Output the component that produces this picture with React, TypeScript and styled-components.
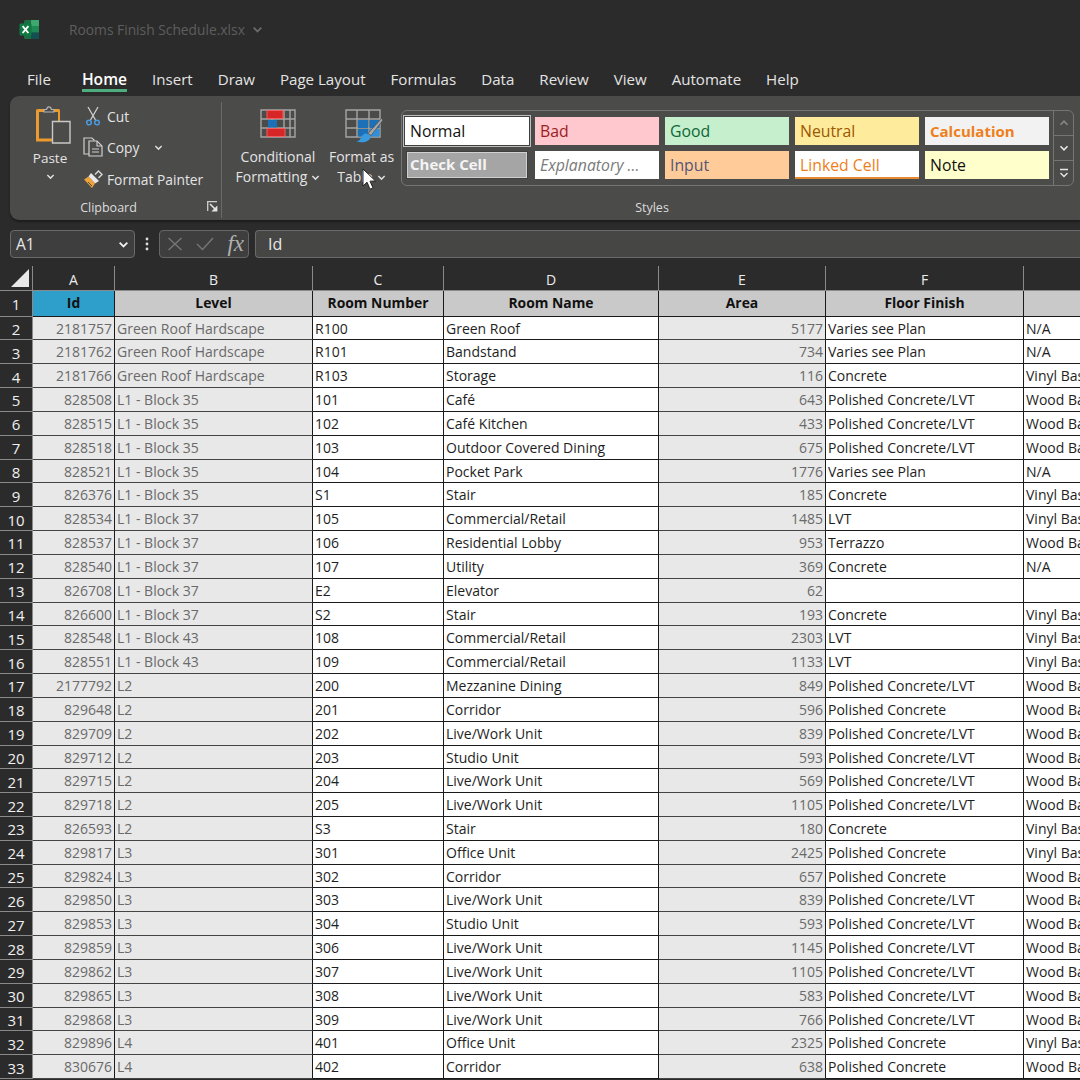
import React from "react";
import styled, { createGlobalStyle } from "styled-components";

const Global = createGlobalStyle`
  html, body { margin: 0; padding: 0; background: #2b2b2b; overflow: hidden; }
  #root { width: 1080px; height: 1080px; overflow: hidden; }
  * { box-sizing: border-box; }
`;
const FONT = `"Open Sans", "Noto Sans", "Liberation Sans", sans-serif`;

const Page = styled.div`
  position: relative; width: 1080px; height: 1080px; overflow: hidden;
  background: #2b2b2b; font-family: ${FONT}; color: #e6e6e6;
`;
const TitleBar = styled.div`
  height: 60px; display: flex; align-items: center; padding: 0 0 1px 19px;
`;
const FileName = styled.div`
  margin-left: 29px; font-size: 13.8px; color: #5e5e5e; display: flex; align-items: center; gap: 7px;
`;
const Tabs = styled.div`
  height: 36px; display: flex; padding-left: 27px; gap: 25px;
`;
const Tab = styled.div<{ $active?: boolean }>`
  height: 36px; padding-top: 7.5px; font-size: ${p => p.$active ? 15.6 : 15.1}px; line-height: 22px; color: ${p => p.$active ? "#fff" : "#e4e4e4"};
  font-weight: ${p => p.$active ? 600 : 400}; margin-left: ${p => p.$active ? 6 : 0}px; white-space: nowrap;
  &::after { content: ""; display: ${p => p.$active ? "block" : "none"}; height: 3px; background: #4fae7f; margin-top: -0.5px; }
`;
const Ribbon = styled.div`
  height: 124px; margin-left: 10px; background: #4b4b4a; border-radius: 9px 0 0 9px;
  display: flex; box-shadow: 0 2px 2px #1d1d1d;
`;
const ClipGroup = styled.div`
  width: 212px; height: 116px; margin-top: 6px; border-right: 1px solid #6a6a6a; position: relative;
  display: grid; grid-template-columns: 68px 1fr; grid-template-rows: 1fr 22px;
`;
const PasteCol = styled.div`
  display: flex; flex-direction: column; align-items: center; padding: 0 0 0 12px;
  font-size: 13.5px; line-height: 18px; color: #e4e4e4;
`;
const PasteIconWrap = styled.div`
  margin: 4px 0 5px 6px; display: flex;
`;
const PasteChevron = styled.div`
  margin-top: 5px; display: flex;
`;
const ClipCol = styled.div`
  padding: 0 0 0 4px; display: flex; flex-direction: column;
`;
const ClipItem = styled.div`
  height: 32px; display: flex; align-items: center; gap: 3px; font-size: 13.8px; color: #e4e4e4;
  &:first-child { height: 29px; padding-bottom: 1px; }
`;
const IconSlot = styled.span`
  width: 22px; display: flex; justify-content: center; flex: none;
`;
const CopyChevron = styled.span`
  margin-left: 12px; display: flex;
`;
const GroupLabel = styled.div`
  grid-column: 1 / 3; font-size: 12.5px; color: #dcdcdc; display: flex; justify-content: center; align-items: center;
  padding-right: 14px; height: 22px; position: relative;
`;
const Launcher = styled.span`
  position: absolute; right: 3px; top: 5px; display: flex;
`;
const FormatGroup = styled.div`
  width: 179px; display: flex; padding-top: 13px; padding-left: 14px;
`;
const BigButton = styled.div<{ $w: number; $shift?: number }>`
  width: ${p => p.$w}px; display: flex; flex-direction: column; align-items: center;
  padding-left: ${p => p.$shift ?? 0}px;
  font-size: 14px; line-height: 20px; color: #e4e4e4; text-align: center;
`;
const IconWrap = styled.div<{ $h: number; $x?: number }>`
  height: ${p => p.$h}px; display: flex; align-items: flex-start; margin-left: ${p => p.$x ?? 0}px;
`;
const ChevronLine = styled.div`
  display: flex; align-items: center; gap: 4px; white-space: nowrap;
`;
const StylesGroup = styled.div`
  flex: 1; padding-top: 14px; display: flex; flex-direction: column;
`;
const Gallery = styled.div`
  width: 673px; height: 76px; border: 1px solid #757575; border-radius: 6px; display: flex; padding: 6px 0 0 3px;
`;
const GalleryGrid = styled.div`
  width: 644px; display: grid; grid-template-columns: repeat(5, 124px); grid-template-rows: 28px 28px; column-gap: 6px; row-gap: 6px;
`;
const StyleCell = styled.div<{ $bg: string; $c: string; $b?: boolean; $i?: boolean; $under?: boolean }>`
  background: ${p => p.$bg}; color: ${p => p.$c}; font-size: ${p => p.$b ? 15 : 15.8}px; line-height: 28px; padding-left: 5px;
  font-weight: ${p => p.$b ? 700 : 400}; font-style: ${p => p.$i ? "italic" : "normal"};
  white-space: nowrap; overflow: hidden;
  border-bottom: ${p => p.$under ? "2px solid #e58a2e" : "0"};
`;
const NormalCell = styled(StyleCell)`
  box-shadow: 0 0 0 1px #3f3f3f, 0 0 0 2px #bdbdbd;
`;
const CheckCell = styled(StyleCell)`
  margin: 1px 2px; padding-left: 3px; line-height: 25px;
  box-shadow: inset 0 0 0 1px #d0d0d0, 0 0 0 1px #3f3f3f;
`;
const GalleryScroll = styled.div`
  flex: 1; margin: -6px 0 0 4px; border-left: 1px solid #757575; display: flex; flex-direction: column;
`;
const ScrollBtn = styled.div`
  flex: 1; display: flex; align-items: center; justify-content: center; border-bottom: 1px solid #757575;
  &:last-child { border-bottom: 0; }
`;
const StylesLabel = styled.div`
  width: 502px; text-align: center; font-size: 12.5px; color: #dcdcdc; margin-top: 13px;
`;
const FormulaBar = styled.div`
  height: 46px; padding: 10px 0 0 10px; display: flex; align-items: flex-start;
`;
const NameBox = styled.div`
  width: 125px; height: 28px; border: 1px solid #6a6a6a; background: #3e3e3e; border-radius: 4px; font-size: 15.5px;
  display: flex; align-items: center; justify-content: space-between; padding: 0 5px; color: #e8e8e8;
`;
const Dots = styled.div`
  width: 24px; display: flex; justify-content: center; height: 28px; align-items: center;
`;
const FxBox = styled.div`
  width: 90px; height: 28px; border: 1px solid #666; background: #3e3e3e; border-radius: 4px; display: flex; align-items: center;
  padding: 0 4px 0 7px; justify-content: space-between; color: #aaa;
`;
const Fx = styled.span`
  font-family: "Liberation Serif", serif; font-style: italic; font-size: 23px; color: #b0b0b0; line-height: 22px;
`;
const FormulaInput = styled.div`
  flex: 1; margin-left: 6px; height: 28px; border: 1px solid #6a6a6a; border-right: 0; background: #464645; border-radius: 4px 0 0 4px;
  font-size: 16px; line-height: 26px; padding-left: 12px; color: #e8e8e8;
`;
const Sheet = styled.div`
  display: grid; grid-template-columns: 33px 82px 198px 131px 215px 167px 198px 200px;
  grid-template-rows: 25px 25.6px repeat(32, 23.84px);
`;
const Corner = styled.div`
  background: #2b2b2b; border-bottom: 1px solid #8a8a8a; border-right: 1px solid #8a8a8a; display: flex; align-items: flex-end; justify-content: flex-end; padding: 0 2px 2px 0;
`;
const ColHead = styled.div`
  background: #2b2b2b; border-right: 1px solid #8a8a8a; border-bottom: 1px solid #8a8a8a; color: #ececec; font-size: 14px;
  line-height: 27px; text-align: center;
`;
const RowHead = styled.div`
  background: #2b2b2b; border-bottom: 1px solid #8a8a8a; border-right: 1px solid #8a8a8a; color: #f0f0f0; font-size: 15px;
  display: flex; align-items: center; justify-content: center; padding-top: 2px;
`;
const HeadCell = styled.div<{ $blue?: boolean }>`
  background: ${p => p.$blue ? "#2d9fca" : "#c9c9c9"}; border-right: 1px solid #1a1a1a; border-bottom: 1px solid #1a1a1a;
  color: #111; font-size: 13.9px; font-weight: 700; text-align: center; line-height: 24px; white-space: nowrap; overflow: hidden;
`;
const Cell = styled.div<{ $grey?: boolean; $right?: boolean }>`
  background: ${p => p.$grey ? "#e8e8e8" : "#fff"}; color: ${p => p.$grey ? "#6a6a6a" : "#1e1e1e"};
  border-right: 1px solid #1a1a1a; border-bottom: 1px solid ${p => p.$grey ? "#444" : "#1a1a1a"}; font-size: 14px; line-height: 22px; white-space: nowrap; overflow: hidden;
  padding: 1px 2px 0; text-align: ${p => p.$right ? "right" : "left"};
`;
const Pointer = styled.svg`
  position: absolute; left: 362px; top: 168px;
`;

const Chev = ({ c = "#dedede", s = 9 }: { c?: string; s?: number }) => (
  <svg width={s} height={s} viewBox="0 0 10 10"><path d="M1.5 3.2 5 6.8 8.5 3.2" fill="none" stroke={c} strokeWidth="1.6" /></svg>
);
const ExcelLogo = () => (
  <svg width="21" height="21" viewBox="0 0 21 21">
    <rect x="5" y="1" width="15" height="19" rx="1.5" fill="#1b6e42" />
    <rect x="12" y="1" width="8" height="6" fill="#3fa86f" />
    <rect x="12" y="7" width="8" height="6.5" fill="#1f8a55" />
    <rect x="12" y="13.5" width="8" height="6.5" fill="#124f50" />
    <rect x="0.5" y="4.5" width="12" height="12" rx="1" fill="#0f7a41" />
    <path d="M3.6 7.2 9.4 14M9.4 7.2 3.6 14" stroke="#fff" strokeWidth="1.9" />
  </svg>
);
const PasteIcon = () => (
  <svg width="36" height="38" viewBox="0 0 36 38">
    <path d="M2.5 4.5h22M2.5 3.5v30.5h15" fill="none" stroke="#eb9a2d" strokeWidth="3" />
    <path d="M24 4v12" fill="none" stroke="#eb9a2d" strokeWidth="2" />
    <path d="M9 6V3.5h2.5C12 1.5 13 .8 14 .8s2 .7 2.5 2.7H19V6z" fill="#4b4b4a" stroke="#b5b5b5" strokeWidth="1.2" />
    <path d="M17.5 15.5h17.5v21.5H17.5z" fill="#4b4b4a" stroke="#c9c9c9" strokeWidth="1.4" />
  </svg>
);
const ScissorsIcon = () => (
  <svg width="16" height="20" viewBox="0 0 16 20">
    <path d="M3 1 10.5 14M13 1 5.5 14" stroke="#cfcfcf" strokeWidth="1.3" fill="none" />
    <circle cx="4" cy="16.5" r="2.3" fill="none" stroke="#4b9be0" strokeWidth="1.5" />
    <circle cx="12" cy="16.5" r="2.3" fill="none" stroke="#4b9be0" strokeWidth="1.5" />
  </svg>
);
const CopyIcon = () => (
  <svg width="21" height="20" viewBox="0 0 21 20">
    <path d="M6 17H1V1h8l2.5 2.5" fill="none" stroke="#cfcfcf" strokeWidth="1.2" />
    <path d="M6 4h8l5 5v10H6z" fill="none" stroke="#cfcfcf" strokeWidth="1.2" />
    <path d="M14 4v5h5M9 12h7M9 15h7" fill="none" stroke="#cfcfcf" strokeWidth="1.1" />
  </svg>
);
const BrushIcon = () => (
  <svg width="20" height="19" viewBox="0 0 20 19">
    <path d="M12 4.5 15.5 1l3.5 3.5L15.5 8" fill="none" stroke="#d8d8d8" strokeWidth="1.4" />
    <path d="M8 3 16 11 12 13.5 5.5 6.5z" fill="#e8e8e8" />
    <path d="M5.5 6.5 12 13.5 9 18 1 9.5z" fill="#f0a23a" />
    <path d="M5 12 9 16" stroke="#4b4b4a" strokeWidth="1" />
  </svg>
);
const LauncherIcon = () => (
  <svg width="11" height="11" viewBox="0 0 11 11">
    <path d="M.7 10V.7H10" fill="none" stroke="#cfcfcf" strokeWidth="1.3" />
    <path d="M3 3 8.5 8.5" stroke="#e4e4e4" strokeWidth="1.6" />
    <path d="M10.4 4.5v6h-6z" fill="#e4e4e4" />
  </svg>
);
const CFIcon = () => (
  <svg width="36" height="29" viewBox="0 0 36 29">
    <path d="M1 1h34v27H1zM1 10h34M1 19h34M12 1v27M24 1v27M30 1v27" fill="none" stroke="#a5a5a5" strokeWidth="1.4" />
    <path d="M7 1.5h16v8H7z" fill="#d72626" stroke="#f06060" strokeWidth="1" />
    <path d="M7 19.5h18v8H7z" fill="#d72626" stroke="#f06060" strokeWidth="1" />
    <rect x="8" y="11" width="9" height="7.5" fill="#1c70b8" />
  </svg>
);
const FTIcon = () => (
  <svg width="39" height="35" viewBox="0 0 39 35">
    <path d="M1 1h34v27H1zM1 10h34M1 19h34M12 1v27M24 1v27" fill="none" stroke="#a5a5a5" strokeWidth="1.4" />
    <rect x="13" y="11" width="10" height="8" fill="#1c70b8" />
    <rect x="24.5" y="11" width="10" height="8" fill="#1c70b8" />
    <rect x="13" y="20" width="10" height="7.5" fill="#1c70b8" />
    <rect x="24.5" y="20" width="10" height="7.5" fill="#2f8fdc" />
    <path d="M36.5 9.5 38 11 26 26.5 23 24.5z" fill="#a8a8a8" stroke="#4b4b4a" strokeWidth="0.7" />
    <path d="M21.5 24.5c-3 0-5 2-6 5-.5 1.5-2 2.5-4 3 4 1.5 10 1 13-2 1.5-2 1-4 .5-4z" fill="#3a9ae0" />
  </svg>
);

const L1 = "L1 - Block ";
const GR = "Green Roof Hardscape";
const PCL = "Polished Concrete/LVT";
const PC = "Polished Concrete";
const VP = "Varies see Plan";
const VB = "Vinyl Base";
const WB = "Wood Base";
const LW = "Live/Work Unit";
const rows: string[][] = [
  ["2181757", GR, "R100", "Green Roof", "5177", VP, "N/A"],
  ["2181762", GR, "R101", "Bandstand", "734", VP, "N/A"],
  ["2181766", GR, "R103", "Storage", "116", "Concrete", VB],
  ["828508", L1 + "35", "101", "Café", "643", PCL, WB],
  ["828515", L1 + "35", "102", "Café Kitchen", "433", PCL, WB],
  ["828518", L1 + "35", "103", "Outdoor Covered Dining", "675", PCL, WB],
  ["828521", L1 + "35", "104", "Pocket Park", "1776", VP, "N/A"],
  ["826376", L1 + "35", "S1", "Stair", "185", "Concrete", VB],
  ["828534", L1 + "37", "105", "Commercial/Retail", "1485", "LVT", VB],
  ["828537", L1 + "37", "106", "Residential Lobby", "953", "Terrazzo", WB],
  ["828540", L1 + "37", "107", "Utility", "369", "Concrete", "N/A"],
  ["826708", L1 + "37", "E2", "Elevator", "62", "", ""],
  ["826600", L1 + "37", "S2", "Stair", "193", "Concrete", VB],
  ["828548", L1 + "43", "108", "Commercial/Retail", "2303", "LVT", VB],
  ["828551", L1 + "43", "109", "Commercial/Retail", "1133", "LVT", VB],
  ["2177792", "L2", "200", "Mezzanine Dining", "849", PCL, WB],
  ["829648", "L2", "201", "Corridor", "596", PC, WB],
  ["829709", "L2", "202", LW, "839", PCL, WB],
  ["829712", "L2", "203", "Studio Unit", "593", PCL, WB],
  ["829715", "L2", "204", LW, "569", PCL, WB],
  ["829718", "L2", "205", LW, "1105", PCL, WB],
  ["826593", "L2", "S3", "Stair", "180", "Concrete", VB],
  ["829817", "L3", "301", "Office Unit", "2425", PC, VB],
  ["829824", "L3", "302", "Corridor", "657", PC, WB],
  ["829850", "L3", "303", LW, "839", PCL, WB],
  ["829853", "L3", "304", "Studio Unit", "593", PCL, WB],
  ["829859", "L3", "306", LW, "1145", PCL, WB],
  ["829862", "L3", "307", LW, "1105", PCL, WB],
  ["829865", "L3", "308", LW, "583", PCL, WB],
  ["829868", "L3", "309", LW, "766", PCL, WB],
  ["829896", "L4", "401", "Office Unit", "2325", PC, VB],
  ["830676", "L4", "402", "Corridor", "638", PC, WB],
];
const headers = ["Id", "Level", "Room Number", "Room Name", "Area", "Floor Finish", ""];
const letters = ["A", "B", "C", "D", "E", "F", ""];
const tabs = ["File", "Home", "Insert", "Draw", "Page Layout", "Formulas", "Data", "Review", "View", "Automate", "Help"];

export default function App() {
  return (
    <Page>
      <Global />
      <TitleBar>
        <ExcelLogo />
        <FileName>Rooms Finish Schedule.xlsx <Chev c="#6a6a6a" s={11} /></FileName>
      </TitleBar>
      <Tabs>
        {tabs.map(t => <Tab key={t} $active={t === "Home"}>{t}</Tab>)}
      </Tabs>
      <Ribbon>
        <ClipGroup>
          <PasteCol>
            <PasteIconWrap><PasteIcon /></PasteIconWrap>
            Paste
            <PasteChevron><Chev /></PasteChevron>
          </PasteCol>
          <ClipCol>
            <ClipItem><IconSlot><ScissorsIcon /></IconSlot>Cut</ClipItem>
            <ClipItem><IconSlot><CopyIcon /></IconSlot>Copy<CopyChevron><Chev /></CopyChevron></ClipItem>
            <ClipItem><IconSlot><BrushIcon /></IconSlot>Format Painter</ClipItem>
          </ClipCol>
          <GroupLabel>Clipboard<Launcher><LauncherIcon /></Launcher></GroupLabel>
        </ClipGroup>
        <FormatGroup>
          <BigButton $w={84}>
            <IconWrap $h={38}><CFIcon /></IconWrap>
            Conditional
            <ChevronLine>Formatting <Chev /></ChevronLine>
          </BigButton>
          <BigButton $w={84} $shift={2}>
            <IconWrap $h={38} $x={5}><FTIcon /></IconWrap>
            Format as
            <ChevronLine>Table <Chev /></ChevronLine>
          </BigButton>
        </FormatGroup>
        <StylesGroup>
          <Gallery>
            <GalleryGrid>
              <NormalCell $bg="#fff" $c="#111">Normal</NormalCell>
              <StyleCell $bg="#ffc7ce" $c="#9c1c1c">Bad</StyleCell>
              <StyleCell $bg="#c6efce" $c="#0f6636">Good</StyleCell>
              <StyleCell $bg="#ffeb9c" $c="#9c5700">Neutral</StyleCell>
              <StyleCell $bg="#f2f2f2" $c="#ee7f1a" $b>Calculation</StyleCell>
              <CheckCell $bg="#a5a5a5" $c="#f4f4f4" $b>Check Cell</CheckCell>
              <StyleCell $bg="#fff" $c="#7a7a7a" $i>Explanatory ...</StyleCell>
              <StyleCell $bg="#ffcc99" $c="#555577">Input</StyleCell>
              <StyleCell $bg="#fff" $c="#ee7f1a" $under>Linked Cell</StyleCell>
              <StyleCell $bg="#ffffcc" $c="#111">Note</StyleCell>
            </GalleryGrid>
            <GalleryScroll>
              <ScrollBtn><svg width="10" height="10" viewBox="0 0 10 10"><path d="M1.5 6.8 5 3.2 8.5 6.8" fill="none" stroke="#888" strokeWidth="1.5" /></svg></ScrollBtn>
              <ScrollBtn><Chev c="#e6e6e6" s={10} /></ScrollBtn>
              <ScrollBtn><svg width="10" height="11" viewBox="0 0 10 11"><path d="M1 1.5h8M1.5 5 5 8.5 8.5 5" fill="none" stroke="#e6e6e6" strokeWidth="1.4" /></svg></ScrollBtn>
            </GalleryScroll>
          </Gallery>
          <StylesLabel>Styles</StylesLabel>
        </StylesGroup>
      </Ribbon>
      <FormulaBar>
        <NameBox>A1<Chev c="#f0f0f0" s={11} /></NameBox>
        <Dots><svg width="4" height="14" viewBox="0 0 4 14"><circle cx="2" cy="2" r="1.4" fill="#ddd" /><circle cx="2" cy="7" r="1.4" fill="#ddd" /><circle cx="2" cy="12" r="1.4" fill="#ddd" /></svg></Dots>
        <FxBox>
          <svg width="16" height="14" viewBox="0 0 16 14"><path d="M1.5 1 14.5 13M14.5 1 1.5 13" stroke="#777" strokeWidth="1.4" /></svg>
          <svg width="18" height="14" viewBox="0 0 18 14"><path d="M1 7 6.5 12.5 17 1" fill="none" stroke="#777" strokeWidth="1.4" /></svg>
          <Fx>fx</Fx>
        </FxBox>
        <FormulaInput>Id</FormulaInput>
      </FormulaBar>
      <Sheet>
        <Corner><svg width="20" height="20" viewBox="0 0 20 20"><path d="M19 1V19H1z" fill="#e8e8e8" /></svg></Corner>
        {letters.map((l, i) => <ColHead key={i}>{l}</ColHead>)}
        <RowHead>1</RowHead>
        {headers.map((h, i) => <HeadCell key={i} $blue={i === 0}>{h}</HeadCell>)}
        {rows.map((r, ri) => (
          <React.Fragment key={ri}>
            <RowHead>{ri + 2}</RowHead>
            {r.map((v, ci) => (
              <Cell key={ci} $grey={ci === 0 || ci === 1 || ci === 4} $right={ci === 0 || ci === 4}>{v}</Cell>
            ))}
          </React.Fragment>
        ))}
      </Sheet>
      <Pointer width="15" height="23" viewBox="0 0 15 23">
        <path d="M1 1v17l4-3.8 3 7 3-1.3-3-6.8h5.6z" fill="#fff" stroke="#222" strokeWidth="1" />
      </Pointer>
    </Page>
  );
}
